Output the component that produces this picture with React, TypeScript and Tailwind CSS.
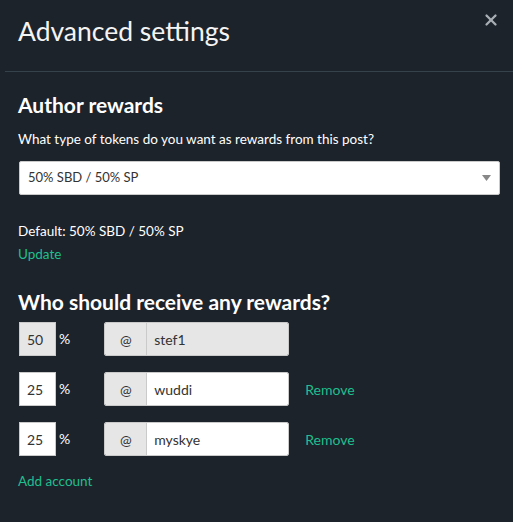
import { X } from 'lucide-react'

const font = { fontFamily: 'Lato, "Open Sans", sans-serif' }

interface Beneficiary {
  percent: string
  username: string
  locked?: boolean
}

const rows: Beneficiary[] = [
  { percent: '50', username: 'stef1', locked: true },
  { percent: '25', username: 'wuddi' },
  { percent: '25', username: 'myskye' },
]

function BeneficiaryRow({ row }: { row: Beneficiary }) {
  const fill = row.locked ? 'bg-[#e6e6e6]' : 'bg-white'
  return (
    <div className="flex items-center h-[34px]">
      <div className={`w-[37px] h-full border border-[#cacaca] ${fill} flex items-center pl-[7px] text-[14px] text-[#333]`}>
        {row.percent}
      </div>
      <span className="ml-[3px] self-start mt-[6px] text-[14px] text-white">%</span>
      <div className="ml-[34px] flex h-full w-[185px] border border-[#cacaca] rounded-[2px] overflow-hidden">
        <div className="w-[42px] bg-[#e6e6e6] border-r border-[#cacaca] flex items-center justify-center text-[14px] text-[#333]">
          @
        </div>
        <div className={`flex-1 ${fill} flex items-center pl-[7px] text-[14px] text-[#333]`}>
          {row.username}
        </div>
      </div>
      {!row.locked && (
        <span className="ml-[16px] text-[14px] text-[#1fbf8f]">Remove</span>
      )}
    </div>
  )
}

export default function App() {
  return (
    <div className="w-[513px] h-[522px] bg-[#1d232b] text-white overflow-hidden" style={font}>
      {/* Header */}
      <div className="relative h-[72px] border-b border-[#35414b] ml-[5px]">
        <h1 className="absolute left-[13px] top-[14px] text-[26.5px] leading-[34px] text-[#f4f4f4]">Advanced settings</h1>
        <X size={18} strokeWidth={3} className="absolute right-[13px] top-[11px] text-[#a8aeb4]" />
      </div>

      <div className="px-[18px]">
        {/* Author rewards */}
        <h2 className="mt-[20px] text-[21px] leading-[26px] font-bold">Author rewards</h2>
        <p className="mt-[11px] text-[13.5px] leading-[20px]">What type of tokens do you want as rewards from this post?</p>
        <div className="mt-[12px] ml-[1px] h-[34px] w-[481px] bg-white border border-[#cacaca] rounded-[2px] flex items-center justify-between pl-[8px] pr-[8px]">
          <span className="text-[13px] text-[#333]">50% SBD / 50% SP</span>
          <svg width="9" height="6" viewBox="0 0 9 6"><path d="M0 0h9L4.5 6z" fill="#888" /></svg>
        </div>
        <p className="mt-[26px] text-[13.5px] leading-[20px]">Default: 50% SBD / 50% SP</p>
        <p className="mt-[3px] text-[13.5px] leading-[20px] text-[#1fbf8f]">Update</p>

        {/* Beneficiaries */}
        <h2 className="mt-[25px] text-[21px] leading-[26px] font-bold">Who should receive any rewards?</h2>
        <div className="mt-[7px] ml-[1px] flex flex-col gap-[16px]">
          {rows.map((r) => (
            <BeneficiaryRow key={r.username} row={r} />
          ))}
        </div>
        <p className="mt-[15px] text-[13.5px] leading-[20px] text-[#1fbf8f]">Add account</p>
      </div>
    </div>
  )
}
